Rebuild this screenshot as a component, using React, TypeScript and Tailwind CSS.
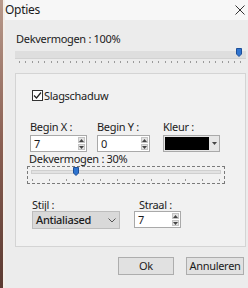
import React from 'react';

const font = { fontFamily: '"Noto Sans", "Liberation Sans", sans-serif', letterSpacing: '-0.3px' };

const Spinner: React.FC = () => (
  <div className="flex flex-col w-[7px] my-[1px] mr-[1px] gap-[1px]">
    <div className="flex-1 bg-[#e3e3e3] border border-[#c4c4c4] flex items-center justify-center">
      <svg width="5" height="3" viewBox="0 0 5 3"><path d="M2.5 0L5 3H0z" fill="#444" /></svg>
    </div>
    <div className="flex-1 bg-[#e3e3e3] border border-[#c4c4c4] flex items-center justify-center">
      <svg width="5" height="3" viewBox="0 0 5 3"><path d="M0 0h5L2.5 3z" fill="#444" /></svg>
    </div>
  </div>
);

const NumberBox: React.FC<{ value: string; width: string }> = ({ value, width }) => (
  <div className={`${width} h-[17px] bg-white border border-[#a9a9a9] flex items-stretch`}>
    <span className="flex-1 pl-[3px] leading-[15px]">{value}</span>
    <Spinner />
  </div>
);

const Ticks: React.FC<{ count: number }> = ({ count }) => (
  <div className="flex justify-between px-[4px]">
    {Array.from({ length: count }).map((_, i) => (
      <div key={i} className="w-[1px] h-[2px] bg-[#9a9a9a]" />
    ))}
  </div>
);

const Thumb: React.FC = () => (
  <svg width="6" height="9" viewBox="0 0 6 9">
    <path d="M0.5 0.5h5v5.5L3 8.5 0.5 6z" fill="#2f74cf" stroke="#1d4f99" strokeWidth="1" />
  </svg>
);

export default function App() {
  return (
    <div className="w-[248px] h-[288px] flex text-[11px] text-[#1b1b1b] overflow-hidden" style={font}>
      <div className="w-[3px] bg-gradient-to-b from-[#b89a8c] via-[#8a5f52] to-[#5b3a32]" />
      <div className="w-[2px] bg-[#f4efe9]" />
      <div className="flex-1 flex flex-col bg-[#ececec]">
        {/* titel */}
        <div className="h-[20px] bg-[#f7f7f7] flex items-center justify-between pr-[3px]">
          <span className="text-[12px]">Opties</span>
          <svg width="10" height="10" viewBox="0 0 10 10">
            <path d="M0.5 0.5l9 9M9.5 0.5l-9 9" stroke="#333" strokeWidth="1" />
          </svg>
        </div>

        <div className="pl-[11px] pt-[12px] leading-[14px]">Dekvermogen : 100%</div>

        {/* slider 1 */}
        <div className="relative ml-[10px] mr-[2px] mt-[2px] h-[16px]">
          <div className="h-[8px] mt-[3px] bg-[#dedede] border-b border-[#d2d2d2]" />
          <div className="mt-[2px]"><Ticks count={36} /></div>
          <div className="absolute right-[4px] top-0"><Thumb /></div>
        </div>

        {/* groepvak */}
        <div className="ml-[10px] mr-[2px] mt-[9px] h-[174px] border border-[#d4d4d4] bg-[#f1f1f1] flex flex-col pl-[16px]">
          <label className="flex items-center gap-[1px] mt-[14px] leading-[15px]">
            <span className="w-[11px] h-[11px] border border-[#333] bg-white flex items-center justify-center">
              <svg width="9" height="9" viewBox="0 0 9 9"><path d="M1 4.5l2.5 2.5L8 1.5" fill="none" stroke="#222" strokeWidth="1.2" /></svg>
            </span>
            <span>Slagschaduw</span>
          </label>

          <div className="flex mt-[17px] -ml-[2px]">
            <div className="flex flex-col w-[67px]">
              <span className="leading-[13px]">Begin X :</span>
              <div className="mt-[2px]"><NumberBox value="7" width="w-[57px]" /></div>
            </div>
            <div className="flex flex-col w-[66px]">
              <span className="leading-[13px]">Begin Y :</span>
              <div className="mt-[2px]"><NumberBox value="0" width="w-[53px]" /></div>
            </div>
            <div className="flex flex-col">
              <span className="leading-[13px]">Kleur :</span>
              <div className="mt-[2px] flex h-[17px] w-[57px] border border-[#a9a9a9] bg-[#e6e6e6]">
                <div className="w-[44px] m-[1px] bg-black" />
                <div className="flex-1 flex items-center justify-center">
                  <svg width="5" height="3" viewBox="0 0 5 3"><path d="M0 0h5L2.5 3z" fill="#444" /></svg>
                </div>
              </div>
            </div>
          </div>

          <div className="-ml-[3px] leading-[14px]">Dekvermogen : 30%</div>

          {/* slider 2 */}
          <div className="relative -ml-[5px] w-[198px] h-[18px] border border-dashed border-[#7a7a7a]">
            <div className="h-[4px] mt-[3px] mx-[3px] bg-[#e2e2e2] border border-[#cfcfcf]" />
            <div className="mt-[5px]"><Ticks count={12} /></div>
            <div className="absolute left-[45px] top-0"><Thumb /></div>
          </div>

          <div className="flex mt-[15px]">
            <div className="flex flex-col w-[102px]">
              <span className="leading-[12px]">Stijl :</span>
              <div className="w-[88px] h-[18px] bg-[#d9d9d9] border border-[#bdbdbd] flex items-center justify-between px-[3px]">
                <span className="font-medium">Antialiased</span>
                <svg width="8" height="5" viewBox="0 0 8 5"><path d="M0.5 0.5L4 4l3.5-3.5" fill="none" stroke="#555" strokeWidth="1" /></svg>
              </div>
            </div>
            <div className="flex flex-col">
              <span className="leading-[12px] pl-[5px]">Straal :</span>
              <NumberBox value="7" width="w-[47px]" />
            </div>
          </div>
        </div>

        {/* knoppen */}
        <div className="flex justify-end gap-[12px] mt-[10px] mr-[4px]">
          <button className="w-[56px] h-[18px] bg-[#e1e1e1] border border-[#adadad] text-[11px]">Ok</button>
          <button className="w-[58px] h-[18px] bg-[#e1e1e1] border border-[#adadad] text-[11px]">Annuleren</button>
        </div>
      </div>
    </div>
  );
}
